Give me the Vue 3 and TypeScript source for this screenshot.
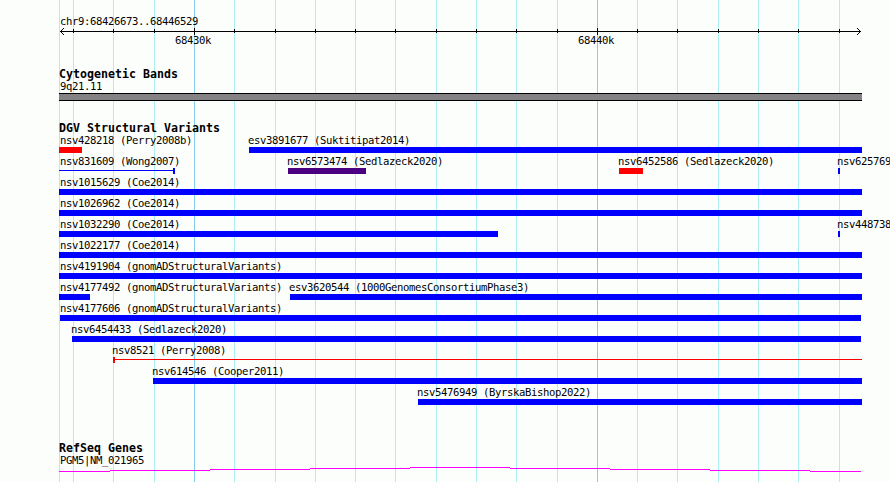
<script setup lang="ts">
interface Label { x: number; y: number; text: string }
interface Block { x: number; y: number; w: number; h: number; fill: string }

const CHAR = 6
const BOLD_CHAR = 7
const LEFT = 59
const RIGHT = 862
const ROW_TOP = 147
const ROW_PITCH = 21

const minorLines = [73, 113, 154, 234, 275, 315, 355, 395, 436, 476, 516, 557, 637, 677, 718, 758, 798, 839]
const majorLines = [194, 597]

const headings: Label[] = [
  { x: 59, y: 78, text: 'Cytogenetic Bands' },
  { x: 59, y: 132, text: 'DGV Structural Variants' },
  { x: 59, y: 452, text: 'RefSeq Genes' },
]
const captions: Label[] = [
  { x: 60, y: 25, text: 'chr9:68426673..68446529' },
  { x: 175, y: 44, text: '68430k' },
  { x: 578, y: 44, text: '68440k' },
  { x: 60, y: 90, text: '9q21.11' },
  { x: 60, y: 464, text: 'PGM5|NM_021965' },
]

interface Variant { row: number; name: string; labelX: number; start: number; end: number; color: string; thin?: 'start' | 'end' }
const blue = '#0000ff'
const red = '#ff0000'
const variants: Variant[] = [
  { row: 0, name: 'nsv428218 (Perry2008b)', labelX: 60, start: 59, end: 82, color: red },
  { row: 0, name: 'esv3891677 (Suktitipat2014)', labelX: 248, start: 249, end: RIGHT, color: blue },
  { row: 1, name: 'nsv831609 (Wong2007)', labelX: 60, start: 59, end: 175, color: blue, thin: 'end' },
  { row: 1, name: 'nsv6573474 (Sedlazeck2020)', labelX: 287, start: 288, end: 366, color: '#4b0082' },
  { row: 1, name: 'nsv6452586 (Sedlazeck2020)', labelX: 618, start: 619, end: 643, color: red },
  { row: 1, name: 'nsv625769', labelX: 837, start: 838, end: 840, color: blue },
  { row: 2, name: 'nsv1015629 (Coe2014)', labelX: 60, start: 59, end: RIGHT, color: blue },
  { row: 3, name: 'nsv1026962 (Coe2014)', labelX: 60, start: 59, end: RIGHT, color: blue },
  { row: 4, name: 'nsv1032290 (Coe2014)', labelX: 60, start: 59, end: 498, color: blue },
  { row: 4, name: 'nsv448738', labelX: 837, start: 838, end: 840, color: blue },
  { row: 5, name: 'nsv1022177 (Coe2014)', labelX: 60, start: 59, end: RIGHT, color: blue },
  { row: 6, name: 'nsv4191904 (gnomADStructuralVariants)', labelX: 60, start: 59, end: RIGHT, color: blue },
  { row: 7, name: 'nsv4177492 (gnomADStructuralVariants)', labelX: 60, start: 59, end: 90, color: blue },
  { row: 7, name: 'esv3620544 (1000GenomesConsortiumPhase3)', labelX: 289, start: 290, end: RIGHT, color: blue },
  { row: 8, name: 'nsv4177606 (gnomADStructuralVariants)', labelX: 60, start: 60, end: 861, color: blue },
  { row: 9, name: 'nsv6454433 (Sedlazeck2020)', labelX: 71, start: 72, end: 861, color: blue },
  { row: 10, name: 'nsv8521 (Perry2008)', labelX: 112, start: 113, end: RIGHT, color: red, thin: 'start' },
  { row: 11, name: 'nsv614546 (Cooper2011)', labelX: 152, start: 153, end: RIGHT, color: blue },
  { row: 12, name: 'nsv5476949 (ByrskaBishop2022)', labelX: 417, start: 418, end: RIGHT, color: blue },
]

const blocks: Block[] = variants.flatMap((v): Block[] => {
  const y = ROW_TOP + v.row * ROW_PITCH
  if (!v.thin) return [{ x: v.start, y, w: v.end - v.start, h: 6, fill: v.color }]
  const capX = v.thin === 'start' ? v.start : v.end - 2
  return [
    { x: v.start, y: y + 2, w: v.end - v.start, h: 1, fill: v.color },
    { x: capX, y, w: 2, h: 6, fill: v.color },
  ]
})

const labels: Label[] = [
  ...captions,
  ...variants.map((v) => ({ x: v.labelX, y: ROW_TOP - 3 + v.row * ROW_PITCH, text: v.name })),
]

// One x per character keeps every glyph on the fixed-width grid.
const positions = (l: Label, step: number) => Array.from(l.text, (_, i) => l.x + i * step).join(' ')

const arrowSteps = [-3, -2, -1, 1, 2, 3]

const genePath = 'M59 471.5H110M110 470.5H210M210 469.5H310M310 468.5H410M410 467.5H510M510 468.5H610M610 469.5H710M710 470.5H810M810 471.5H861'
</script>

<template>
  <main class="browser">
    <svg class="panel" width="890" height="482" viewBox="0 0 890 482">
      <g class="minor">
        <rect :x="LEFT" y="0" width="1" height="482" />
        <rect v-for="x in minorLines" :key="x" :x="x" y="0" width="1" height="482" />
      </g>
      <g class="major">
        <rect v-for="x in majorLines" :key="x" :x="x" y="0" width="1" height="482" />
      </g>

      <g class="ink">
        <rect x="60" y="31" width="801" height="1" />
        <rect v-for="x in minorLines" :key="x" :x="x" y="29" width="1" height="4" />
        <rect v-for="x in majorLines" :key="x" :x="x" y="28" width="1" height="7" />
        <template v-for="d in arrowSteps" :key="d">
          <rect :x="60 + Math.abs(d)" :y="31 + d" width="1" height="1" />
          <rect :x="860 - Math.abs(d)" :y="31 + d" width="1" height="1" />
        </template>
        <rect x="59" y="93" width="803" height="8" />
      </g>
      <rect class="band" x="59" y="94" width="803" height="6" />

      <rect v-for="(b, i) in blocks" :key="i" :x="b.x" :y="b.y" :width="b.w" :height="b.h" :fill="b.fill" />
      <path class="gene" :d="genePath" />

      <text v-for="l in headings" :key="l.text" class="heading" :x="positions(l, BOLD_CHAR)" :y="l.y">{{ l.text }}</text>
      <text v-for="l in labels" :key="l.text" class="label" :x="positions(l, CHAR)" :y="l.y">{{ l.text }}</text>
    </svg>
  </main>
</template>

<style>
body {
  background: #fcfefc;
  overflow: hidden;
}
</style>

<style scoped>
.browser {
  width: 890px;
  height: 482px;
}
.panel {
  display: block;
  shape-rendering: crispEdges;
}
.minor { fill: #afeeee; }
.major { fill: #87ceeb; }
.ink { fill: #000; }
.band { fill: #848284; }
.gene {
  fill: none;
  stroke: #ff00ff;
}
.label,
.heading {
  fill: #000;
  font-family: "DejaVu Sans Mono", monospace;
  font-size: 10.6px;
  white-space: pre;
}
.heading {
  font-size: 11.6px;
  font-weight: bold;
}
</style>
